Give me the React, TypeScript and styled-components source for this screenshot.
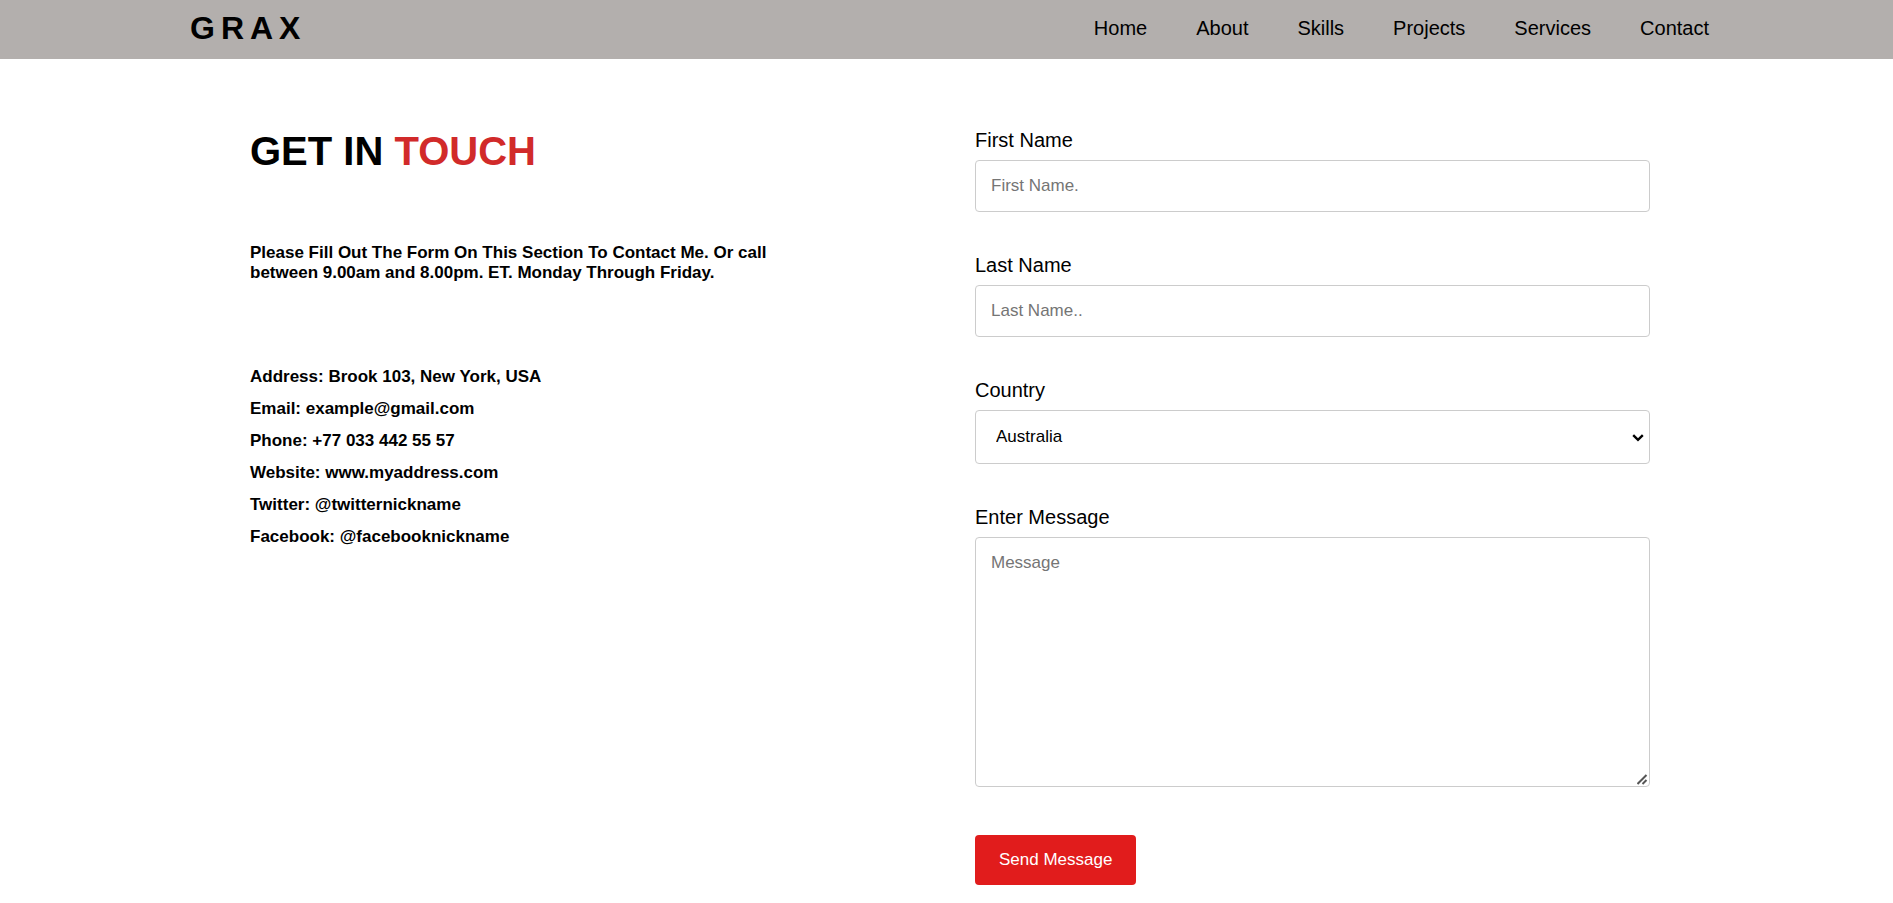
import React from "react";
import styled, { createGlobalStyle, css } from "styled-components";

const GlobalStyle = createGlobalStyle`
  * { margin: 0; padding: 0; box-sizing: border-box; }
  body { background: #fff; color: #000; font-family: "Liberation Sans", Arial, sans-serif; }
`;

const Header = styled.header`
  display: flex;
  justify-content: space-between;
  align-items: center;
  height: 59px;
  padding: 0 184px 3px 190px;
  background: #b3afad;
`;

const Logo = styled.a`
  color: #000;
  font-size: 32px;
  font-weight: 700;
  line-height: 36px;
  letter-spacing: 6px;
  text-decoration: none;
`;

const Nav = styled.nav`
  display: flex;
  gap: 49px;
`;

const NavLink = styled.a`
  color: #000;
  font-size: 20px;
  line-height: 24px;
  text-decoration: none;
`;

const Main = styled.main`
  display: grid;
  grid-template-columns: 1fr 1fr;
  gap: 50px;
  padding: 69px 243px 18px 250px;
`;

const Title = styled.h1`
  font-size: 40px;
  line-height: 46px;
  margin-bottom: 69px;
`;

const Accent = styled.span`
  color: #d12a2a;
`;

const Intro = styled.p`
  max-width: 540px;
  font-size: 17px;
  font-weight: 700;
  line-height: 20px;
  margin-bottom: 84px;
`;

const Details = styled.ul`
  display: grid;
  gap: 12px;
  list-style: none;
  font-size: 17px;
  font-weight: 700;
  line-height: 20px;
`;

const Form = styled.form`
  display: flex;
  flex-direction: column;
  align-items: flex-start;
  gap: 41px;
`;

const Field = styled.div`
  width: 100%;
`;

const Label = styled.label`
  display: block;
  margin-bottom: 8px;
  font-size: 20px;
  line-height: 24px;
`;

const control = css`
  display: block;
  width: 100%;
  padding: 15px;
  border: 1px solid #ccc;
  border-radius: 4px;
  background: #fff;
  color: #000;
  font-family: inherit;
  font-size: 17px;
  line-height: 20px;
`;

const Input = styled.input`
  ${control}
  height: 52px;
`;

const ControlWrap = styled.div`
  position: relative;
`;

const Select = styled.select`
  ${control}
  height: 54px;
  padding: 0 20px;
  appearance: none;
`;

const Chevron = styled.svg`
  position: absolute;
  right: 6px;
  top: 24px;
  pointer-events: none;
`;

const Message = styled.textarea`
  ${control}
  height: 250px;
  resize: vertical;

  &::-webkit-resizer {
    background: transparent;
  }
`;

const Grip = styled.svg`
  position: absolute;
  right: 2px;
  bottom: 2px;
  pointer-events: none;
`;

const Submit = styled.button`
  height: 50px;
  margin-top: 7px;
  padding: 0 24px;
  border: 0;
  border-radius: 4px;
  background: #e11c1c;
  color: #fff;
  font-family: inherit;
  font-size: 17px;
  line-height: 20px;
  cursor: pointer;
`;

const links = ["Home", "About", "Skills", "Projects", "Services", "Contact"];

const details = [
  "Address: Brook 103, New York, USA",
  "Email: example@gmail.com",
  "Phone: +77 033 442 55 57",
  "Website: www.myaddress.com",
  "Twitter: @twitternickname",
  "Facebook: @facebooknickname",
];

export default function App() {
  return (
    <>
      <GlobalStyle />
      <Header>
        <Logo href="#home">GRAX</Logo>
        <Nav>
          {links.map((link) => (
            <NavLink key={link} href={`#${link.toLowerCase()}`}>{link}</NavLink>
          ))}
        </Nav>
      </Header>
      <Main>
        <section>
          <Title>GET IN <Accent>TOUCH</Accent></Title>
          <Intro>
            Please Fill Out The Form On This Section To Contact Me. Or call
            between 9.00am and 8.00pm. ET. Monday Through Friday.
          </Intro>
          <Details>
            {details.map((line) => <li key={line}>{line}</li>)}
          </Details>
        </section>
        <Form onSubmit={(e) => e.preventDefault()}>
          <Field>
            <Label htmlFor="fname">First Name</Label>
            <Input id="fname" type="text" placeholder="First Name." />
          </Field>
          <Field>
            <Label htmlFor="lname">Last Name</Label>
            <Input id="lname" type="text" placeholder="Last Name.." />
          </Field>
          <Field>
            <Label htmlFor="country">Country</Label>
            <ControlWrap>
              <Select id="country" defaultValue="Australia">
                <option>Australia</option>
                <option>Canada</option>
                <option>USA</option>
              </Select>
              <Chevron width="12" height="8" viewBox="0 0 12 8" aria-hidden="true">
                <path d="M1.2 1.2 L6 5.8 L10.8 1.2" fill="none" stroke="#000" strokeWidth="2.4" />
              </Chevron>
            </ControlWrap>
          </Field>
          <Field>
            <Label htmlFor="message">Enter Message</Label>
            <ControlWrap>
              <Message id="message" placeholder="Message" />
              <Grip width="11" height="11" viewBox="0 0 11 11" aria-hidden="true">
                <path d="M0.5 10 L9.5 1 M5.5 10 L9.5 6" fill="none" stroke="#555" strokeWidth="2" />
              </Grip>
            </ControlWrap>
          </Field>
          <Submit type="submit">Send Message</Submit>
        </Form>
      </Main>
    </>
  );
}
